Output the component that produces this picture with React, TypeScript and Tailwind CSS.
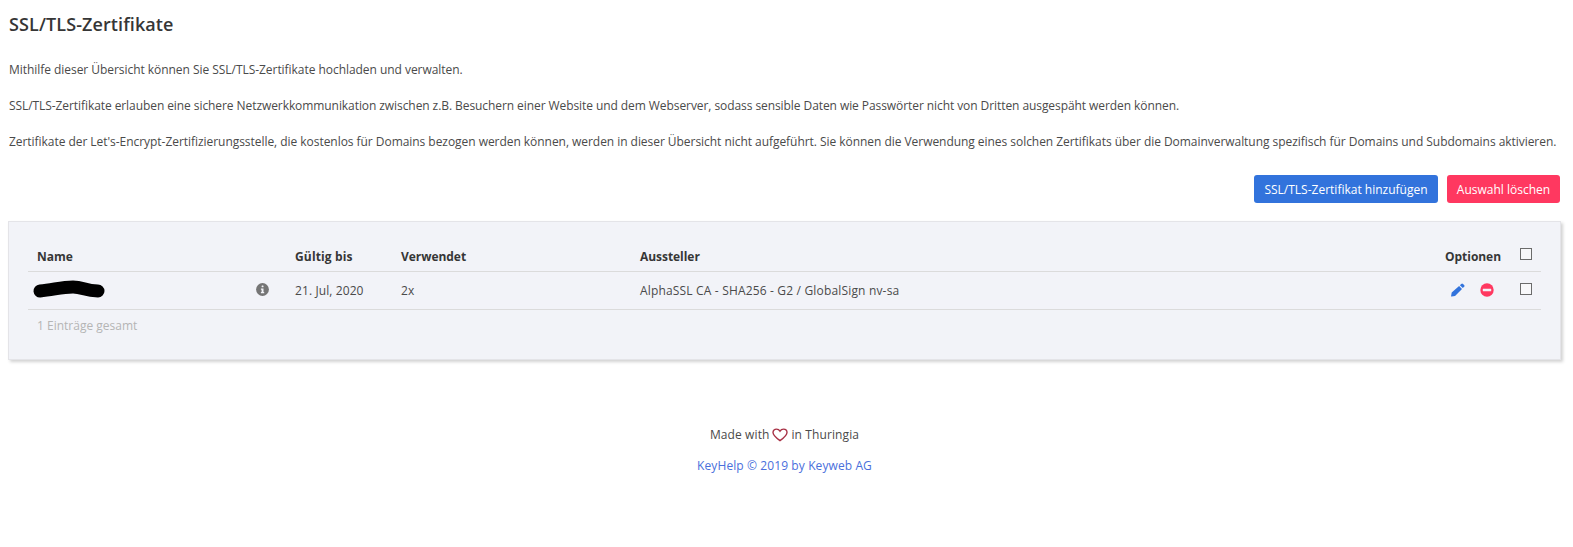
import React from "react";

const Check = () => <span className="block w-[10px] h-[10px] border border-[#6b6b6b] bg-[#f8f8fa] box-content" />;

export default function App() {
  return (
    <div className="bg-white min-h-[547px] pl-[9px] pr-[9px] text-[12px] leading-[18px] tracking-[-0.045px] text-[#4a4a4a] font-['Open_Sans',sans-serif]">
      <h1 className="pt-[14px] text-[18px] leading-[21px] tracking-[0.1px] font-semibold text-[#363636]">SSL/TLS-Zertifikate</h1>
      <p className="mt-[26px]">Mithilfe dieser Übersicht können Sie SSL/TLS-Zertifikate hochladen und verwalten.</p>
      <p className="mt-[18px] tracking-[-0.075px]">SSL/TLS-Zertifikate erlauben eine sichere Netzwerkkommunikation zwischen z.B. Besuchern einer Website und dem Webserver, sodass sensible Daten wie Passwörter nicht von Dritten ausgespäht werden können.</p>
      <p className="mt-[18px] whitespace-nowrap">Zertifikate der Let's-Encrypt-Zertifizierungsstelle, die kostenlos für Domains bezogen werden können, werden in dieser Übersicht nicht aufgeführt. Sie können die Verwendung eines solchen Zertifikats über die Domainverwaltung spezifisch für Domains und Subdomains aktivieren.</p>
      <div className="mt-[24px] flex justify-end gap-[9px] pr-[4px]">
        <button className="h-[28px] w-[184px] pt-px rounded-[3px] bg-[#3273dc] text-white text-[12px] tracking-normal">SSL/TLS-Zertifikat hinzufügen</button>
        <button className="h-[28px] w-[113px] pt-px rounded-[3px] bg-[#ff3860] text-white text-[12px] tracking-normal">Auswahl löschen</button>
      </div>
      <section className="mt-[18px] -ml-px mr-[3px] h-[139px] border border-[#e4e4e8] bg-[#f2f3f8] px-[19px] pt-[19px] shadow-[2px_2px_3px_rgba(0,0,0,0.18)]">
        <table className="w-full table-fixed border-collapse text-left">
          <colgroup>
            <col className="w-[258px]" />
            <col className="w-[106px]" />
            <col className="w-[239px]" />
            <col />
            <col className="w-[84px]" />
            <col className="w-[32px]" />
          </colgroup>
          <thead>
            <tr className="h-[30px] border-b border-[#dbdbdb] text-[#363636]">
              <th className="pl-[9px] pt-[3px] font-bold">Name</th>
              <th className="pl-[9px] pt-[3px] font-bold tracking-[0.15px]">Gültig bis</th>
              <th className="pl-[9px] pt-[3px] font-bold">Verwendet</th>
              <th className="pl-[9px] pt-[3px] font-bold">Aussteller</th>
              <th className="font-bold pt-[3px] text-right pr-[8px]">Optionen</th>
              <th className="pb-[3px] pl-[11px]"><Check /></th>
            </tr>
          </thead>
          <tbody>
            <tr className="h-[38px] border-b border-[#dbdbdb]">
              <td className="pl-[5px]">
                <div className="flex items-center justify-between pr-[17px]">
                  <svg width="72" height="20" viewBox="0 0 72 20" aria-hidden="true"><path d="M7 11C20 10 28 7 40 7C50 7 52 11 65 11" stroke="#000" strokeWidth="13" strokeLinecap="round" fill="none" /></svg>
                  <svg width="13" height="13" viewBox="0 0 13 13" className="-mt-[2px]" aria-hidden="true"><circle cx="6.5" cy="6.5" r="6.4" fill="#757575" /><rect x="5.6" y="2.4" width="1.9" height="1.9" rx=".5" fill="#f2f3f8" /><path d="M4.9 5.5h2.6v3.6h.7v1.2H4.9V9.1h.7V6.7h-.7z" fill="#f2f3f8" /></svg>
                </div>
              </td>
              <td className="pl-[9px] pt-px tracking-[0.1px]">21. Jul, 2020</td>
              <td className="pl-[9px] pt-px tracking-[0.17px]">2x</td>
              <td className="pl-[9px] pt-px tracking-[0.17px]">AlphaSSL CA - SHA256 - G2 / GlobalSign nv-sa</td>
              <td>
                <div className="flex items-center justify-end gap-[15px] pr-[15px]">
                  <svg width="14" height="14" viewBox="0 0 14 14" aria-hidden="true"><path d="M10.2.9a1.3 1.3 0 0 1 1.8 0l1.1 1.1a1.3 1.3 0 0 1 0 1.8l-1.3 1.3-2.9-2.9zM8.1 3l2.9 2.9-7 7-3.3.6a.5.5 0 0 1-.6-.6l.6-3.3z" fill="#3273dc" /></svg>
                  <svg width="14" height="14" viewBox="0 0 14 14" aria-hidden="true"><circle cx="7" cy="7" r="6.7" fill="#ff3860" /><rect x="2.8" y="5.7" width="8.4" height="2.6" rx=".4" fill="#f2f3f8" /></svg>
                </div>
              </td>
              <td className="pl-[11px] pb-[2px]"><Check /></td>
            </tr>
          </tbody>
        </table>
        <p className="mt-[7px] pl-[9px] tracking-normal text-[#b5b5b5]">1 Einträge gesamt</p>
      </section>
      <footer className="text-center tracking-[0.1px] pr-[4px]">
        <p className="mt-[66px] flex items-center justify-center gap-[3px]">
          Made with
          <svg width="16" height="14" viewBox="0 0 17 15" aria-hidden="true"><path d="M8.5 13.6C4 10.4 1 8 1 4.9 1 2.7 2.7 1.2 4.7 1.2c1.6 0 3 .8 3.8 2.2.8-1.4 2.2-2.2 3.8-2.2 2 0 3.7 1.5 3.7 3.7 0 3.1-3 5.5-7.5 8.7z" fill="none" stroke="#a83246" strokeWidth="1.5" /></svg>
          in Thuringia
        </p>
        <p className="mt-[13px] text-[#4a6fdc]">KeyHelp © 2019 by Keyweb AG</p>
      </footer>
    </div>
  );
}
